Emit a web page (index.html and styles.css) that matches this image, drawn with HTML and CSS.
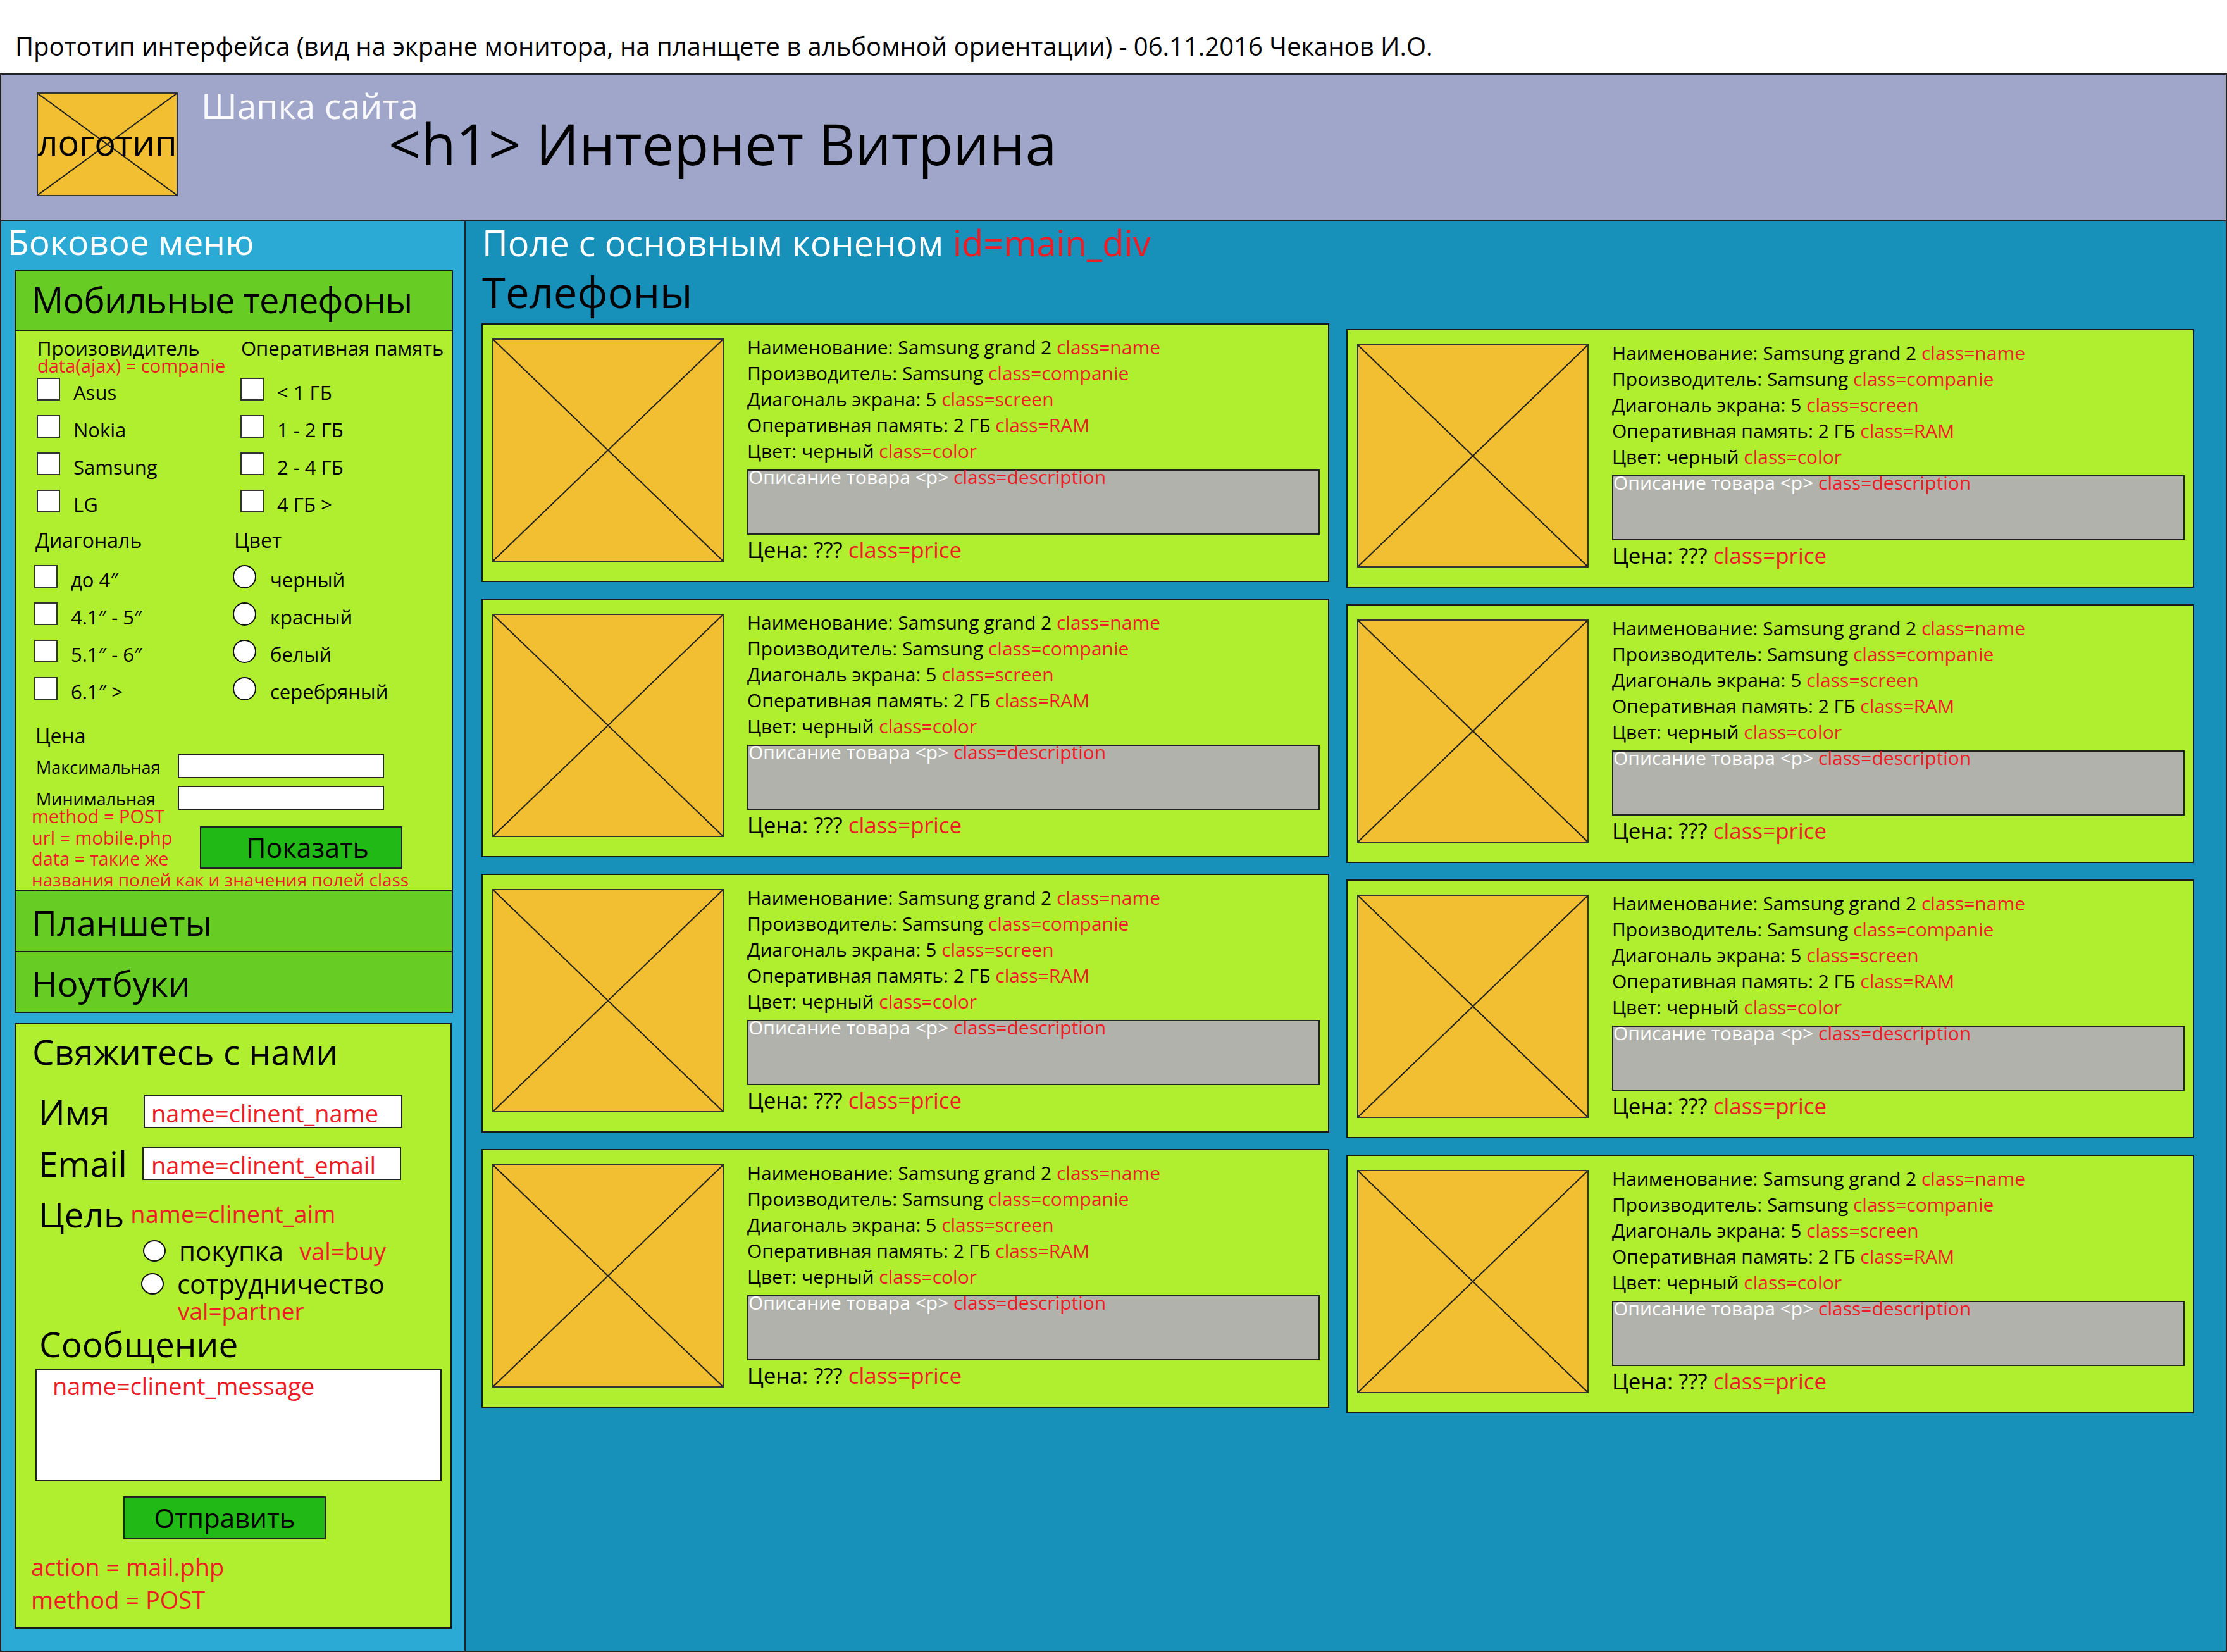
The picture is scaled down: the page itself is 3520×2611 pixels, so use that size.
FILE: index.html
```html
<!DOCTYPE html>
<html lang="ru">
<head>
<meta charset="utf-8">
<title>Прототип интерфейса</title>
<link rel="stylesheet" href="styles.css">
</head>
<body>
<div class="caption">Прототип интерфейса (вид на экране монитора, на планщете в альбомной ориентации) - 06.11.2016 Чеканов И.О.</div>
<div class="frame">
  <header class="site-header">
    <div class="logo">
      <svg class="cross" viewBox="0 0 100 100" preserveAspectRatio="none"><line x1="0" y1="0" x2="100" y2="100"/><line x1="100" y1="0" x2="0" y2="100"/></svg>
      <span class="logo-text">логотип</span>
    </div>
    <div class="header-text">
      <div class="header-label">Шапка сайта</div>
      <h1 class="site-title">&lt;h1&gt; Интернет Витрина</h1>
    </div>
  </header>

  <div class="layout">
    <aside class="sidebar">
      <div class="side-title">Боковое меню</div>

      <div class="catalog">
        <div class="cat-head">Мобильные телефоны</div>
        <div class="filter">
          <div class="f-grid f-top">
            <div class="f-head">Произовидитель</div>
            <div class="f-head">Оперативная память</div>
            <div class="note-tight">data(ajax) = companie</div>
            <div></div>
            <div class="opt first"><span class="chk"></span><span class="opt-label">Asus</span></div>
            <div class="opt first"><span class="chk"></span><span class="opt-label">&lt; 1 ГБ</span></div>
            <div class="opt"><span class="chk"></span><span class="opt-label">Nokia</span></div>
            <div class="opt"><span class="chk"></span><span class="opt-label">1 - 2 ГБ</span></div>
            <div class="opt"><span class="chk"></span><span class="opt-label">Samsung</span></div>
            <div class="opt"><span class="chk"></span><span class="opt-label">2 - 4 ГБ</span></div>
            <div class="opt"><span class="chk"></span><span class="opt-label">LG</span></div>
            <div class="opt"><span class="chk"></span><span class="opt-label">4 ГБ &gt;</span></div>
          </div>

          <div class="f-grid f-bottom">
            <div class="f-head f-head-b">Диагональ</div>
            <div class="f-head f-head-b">Цвет</div>
            <div class="opt first-b"><span class="chk"></span><span class="opt-label">до 4″</span></div>
            <div class="opt first-b"><span class="rad"></span><span class="opt-label">черный</span></div>
            <div class="opt"><span class="chk"></span><span class="opt-label">4.1″ - 5″</span></div>
            <div class="opt"><span class="rad"></span><span class="opt-label">красный</span></div>
            <div class="opt"><span class="chk"></span><span class="opt-label">5.1″ - 6″</span></div>
            <div class="opt"><span class="rad"></span><span class="opt-label">белый</span></div>
            <div class="opt"><span class="chk"></span><span class="opt-label">6.1″ &gt;</span></div>
            <div class="opt"><span class="rad"></span><span class="opt-label">серебряный</span></div>
          </div>

          <div class="price-head">Цена</div>
          <div class="price-row"><span class="price-label">Максимальная</span><span class="price-input"></span></div>
          <div class="price-row second"><span class="price-label">Минимальная</span><span class="price-input"></span></div>

          <div class="submit-area">
            <div class="note">method = POST</div>
            <div class="show-btn">Показать</div>
            <div class="note">url = mobile.php</div>
            <div class="note">data = такие же</div>
            <div class="note wide">названия полей как и значения полей class</div>
          </div>
        </div>
        <div class="cat-item">Планшеты</div>
        <div class="cat-item">Ноутбуки</div>
      </div>

      <div class="contact">
        <div class="contact-title">Свяжитесь с нами</div>
        <div class="field-row">
          <span class="field-label">Имя</span>
          <span class="field-input">name=clinent_name</span>
        </div>
        <div class="field-row second">
          <span class="field-label">Email</span>
          <span class="field-input shift">name=clinent_email</span>
        </div>
        <div class="aim-row"><span class="aim-label">Цель</span><span class="red aim-name">name=clinent_aim</span></div>
        <div class="aim-opt"><span class="rad small"></span><span class="aim-text">покупка</span><span class="red val-buy">val=buy</span></div>
        <div class="aim-opt second"><span class="rad small"></span><span class="aim-text">сотрудничество</span></div>
        <div class="red val-partner">val=partner</div>
        <div class="msg-label">Сообщение</div>
        <div class="msg-box">name=clinent_message</div>
        <div class="send-btn">Отправить</div>
        <div class="form-notes">
          <div>action = mail.php</div>
          <div>method = POST</div>
        </div>
      </div>
    </aside>

    <main class="main">
      <div class="main-label">Поле с основным коненом <span class="red">id=main_div</span></div>
      <h2 class="main-title">Телефоны</h2>
      <div class="cards">
        <div class="card-col">
          <div class="card">
            <div class="pic"><svg class="cross" viewBox="0 0 100 100" preserveAspectRatio="none"><line x1="0" y1="0" x2="100" y2="100"/><line x1="100" y1="0" x2="0" y2="100"/></svg></div>
            <div class="info">
              <div>Наименование: Samsung grand 2 <span class="red">class=name</span></div>
              <div>Производитель: Samsung <span class="red">class=companie</span></div>
              <div>Диагональ экрана: 5 <span class="red">class=screen</span></div>
              <div>Оперативная память: 2 ГБ <span class="red">class=RAM</span></div>
              <div>Цвет: черный <span class="red">class=color</span></div>
              <div class="desc"><div class="desc-text">Описание товара &lt;p&gt; <span class="red">class=description</span></div></div>
              <div class="price">Цена: ??? <span class="red">class=price</span></div>
            </div>
          </div>
          <div class="card">
            <div class="pic"><svg class="cross" viewBox="0 0 100 100" preserveAspectRatio="none"><line x1="0" y1="0" x2="100" y2="100"/><line x1="100" y1="0" x2="0" y2="100"/></svg></div>
            <div class="info">
              <div>Наименование: Samsung grand 2 <span class="red">class=name</span></div>
              <div>Производитель: Samsung <span class="red">class=companie</span></div>
              <div>Диагональ экрана: 5 <span class="red">class=screen</span></div>
              <div>Оперативная память: 2 ГБ <span class="red">class=RAM</span></div>
              <div>Цвет: черный <span class="red">class=color</span></div>
              <div class="desc"><div class="desc-text">Описание товара &lt;p&gt; <span class="red">class=description</span></div></div>
              <div class="price">Цена: ??? <span class="red">class=price</span></div>
            </div>
          </div>
          <div class="card">
            <div class="pic"><svg class="cross" viewBox="0 0 100 100" preserveAspectRatio="none"><line x1="0" y1="0" x2="100" y2="100"/><line x1="100" y1="0" x2="0" y2="100"/></svg></div>
            <div class="info">
              <div>Наименование: Samsung grand 2 <span class="red">class=name</span></div>
              <div>Производитель: Samsung <span class="red">class=companie</span></div>
              <div>Диагональ экрана: 5 <span class="red">class=screen</span></div>
              <div>Оперативная память: 2 ГБ <span class="red">class=RAM</span></div>
              <div>Цвет: черный <span class="red">class=color</span></div>
              <div class="desc"><div class="desc-text">Описание товара &lt;p&gt; <span class="red">class=description</span></div></div>
              <div class="price">Цена: ??? <span class="red">class=price</span></div>
            </div>
          </div>
          <div class="card">
            <div class="pic"><svg class="cross" viewBox="0 0 100 100" preserveAspectRatio="none"><line x1="0" y1="0" x2="100" y2="100"/><line x1="100" y1="0" x2="0" y2="100"/></svg></div>
            <div class="info">
              <div>Наименование: Samsung grand 2 <span class="red">class=name</span></div>
              <div>Производитель: Samsung <span class="red">class=companie</span></div>
              <div>Диагональ экрана: 5 <span class="red">class=screen</span></div>
              <div>Оперативная память: 2 ГБ <span class="red">class=RAM</span></div>
              <div>Цвет: черный <span class="red">class=color</span></div>
              <div class="desc"><div class="desc-text">Описание товара &lt;p&gt; <span class="red">class=description</span></div></div>
              <div class="price">Цена: ??? <span class="red">class=price</span></div>
            </div>
          </div>
        </div>

        <div class="card-col right">
          <div class="card">
            <div class="pic"><svg class="cross" viewBox="0 0 100 100" preserveAspectRatio="none"><line x1="0" y1="0" x2="100" y2="100"/><line x1="100" y1="0" x2="0" y2="100"/></svg></div>
            <div class="info">
              <div>Наименование: Samsung grand 2 <span class="red">class=name</span></div>
              <div>Производитель: Samsung <span class="red">class=companie</span></div>
              <div>Диагональ экрана: 5 <span class="red">class=screen</span></div>
              <div>Оперативная память: 2 ГБ <span class="red">class=RAM</span></div>
              <div>Цвет: черный <span class="red">class=color</span></div>
              <div class="desc"><div class="desc-text">Описание товара &lt;p&gt; <span class="red">class=description</span></div></div>
              <div class="price">Цена: ??? <span class="red">class=price</span></div>
            </div>
          </div>
          <div class="card">
            <div class="pic"><svg class="cross" viewBox="0 0 100 100" preserveAspectRatio="none"><line x1="0" y1="0" x2="100" y2="100"/><line x1="100" y1="0" x2="0" y2="100"/></svg></div>
            <div class="info">
              <div>Наименование: Samsung grand 2 <span class="red">class=name</span></div>
              <div>Производитель: Samsung <span class="red">class=companie</span></div>
              <div>Диагональ экрана: 5 <span class="red">class=screen</span></div>
              <div>Оперативная память: 2 ГБ <span class="red">class=RAM</span></div>
              <div>Цвет: черный <span class="red">class=color</span></div>
              <div class="desc"><div class="desc-text">Описание товара &lt;p&gt; <span class="red">class=description</span></div></div>
              <div class="price">Цена: ??? <span class="red">class=price</span></div>
            </div>
          </div>
          <div class="card">
            <div class="pic"><svg class="cross" viewBox="0 0 100 100" preserveAspectRatio="none"><line x1="0" y1="0" x2="100" y2="100"/><line x1="100" y1="0" x2="0" y2="100"/></svg></div>
            <div class="info">
              <div>Наименование: Samsung grand 2 <span class="red">class=name</span></div>
              <div>Производитель: Samsung <span class="red">class=companie</span></div>
              <div>Диагональ экрана: 5 <span class="red">class=screen</span></div>
              <div>Оперативная память: 2 ГБ <span class="red">class=RAM</span></div>
              <div>Цвет: черный <span class="red">class=color</span></div>
              <div class="desc"><div class="desc-text">Описание товара &lt;p&gt; <span class="red">class=description</span></div></div>
              <div class="price">Цена: ??? <span class="red">class=price</span></div>
            </div>
          </div>
          <div class="card">
            <div class="pic"><svg class="cross" viewBox="0 0 100 100" preserveAspectRatio="none"><line x1="0" y1="0" x2="100" y2="100"/><line x1="100" y1="0" x2="0" y2="100"/></svg></div>
            <div class="info">
              <div>Наименование: Samsung grand 2 <span class="red">class=name</span></div>
              <div>Производитель: Samsung <span class="red">class=companie</span></div>
              <div>Диагональ экрана: 5 <span class="red">class=screen</span></div>
              <div>Оперативная память: 2 ГБ <span class="red">class=RAM</span></div>
              <div>Цвет: черный <span class="red">class=color</span></div>
              <div class="desc"><div class="desc-text">Описание товара &lt;p&gt; <span class="red">class=description</span></div></div>
              <div class="price">Цена: ??? <span class="red">class=price</span></div>
            </div>
          </div>
        </div>
      </div>
    </main>
  </div>
</div>
</body>
</html>
```

FILE: styles.css
```css
* { box-sizing: border-box; margin: 0; padding: 0; }

html, body {
  width: 3520px;
  height: 2611px;
  overflow: hidden;
  background: #ffffff;
}

body {
  font-family: "Open Sans", "Noto Sans", sans-serif;
  color: #000;
  white-space: nowrap;
}

.red { color: #ee1c25; }

/* ---------- caption ---------- */
.caption {
  height: 116px;
  padding: 44px 0 0 24px;
  font-size: 40px;
  line-height: 58px;
}

/* ---------- frame ---------- */
.frame {
  height: 2495px;
  border: 2px solid #222;
  display: flex;
  flex-direction: column;
}

.site-header {
  height: 232px;
  flex: none;
  display: flex;
  align-items: flex-start;
  background: #9fa6c9;
  border-bottom: 2px solid #222;
  padding-left: 56px;
}

.logo {
  position: relative;
  width: 223px;
  height: 164px;
  margin-top: 28px;
  background: #f1bf31;
  border: 2px solid #333;
  display: flex;
  align-items: center;
  justify-content: center;
}

.cross {
  position: absolute;
  left: 0;
  top: 0;
  width: 100%;
  height: 100%;
}

.cross line {
  stroke: #222;
  stroke-width: 2;
  vector-effect: non-scaling-stroke;
}

.logo-text {
  position: relative;
  font-size: 56px;
  line-height: 1;
  margin-top: -9px;
}

.header-text {
  margin: 17px 0 0 37px;
}

.header-label {
  color: #fafafc;
  font-size: 55px;
  line-height: 64px;
}

.site-title {
  font-weight: normal;
  font-size: 90px;
  line-height: 100px;
  margin: -23px 0 0 296px;
}

/* ---------- layout ---------- */
.layout {
  flex: 1;
  display: flex;
  min-height: 0;
}

.sidebar {
  width: 734px;
  flex: none;
  background: #2caad6;
  border-right: 2px solid #222;
}

.side-title {
  color: #fff;
  font-size: 55px;
  line-height: 60px;
  padding: 0 0 0 10px;
  margin-top: 2px;
  height: 56px;
}

/* catalog */
.catalog {
  margin: 19px 0 0 21px;
  width: 693px;
  border: 2px solid #1a1a1a;
  background: #b0ef30;
}

.cat-head,
.cat-item {
  background: #67cd25;
  padding-left: 25px;
}

.cat-head {
  height: 94px;
  border-bottom: 2px solid #1a1a1a;
  font-size: 56px;
  letter-spacing: -0.8px;
  line-height: 88px;
}

.cat-item {
  height: 96px;
  border-top: 2px solid #1a1a1a;
  font-size: 55px;
  line-height: 98px;
}

.filter {
  padding-top: 11px;
}

.f-grid {
  display: grid;
}

.f-top {
  grid-template-columns: 322px 1fr;
  padding-left: 33px;
}

.f-bottom {
  grid-template-columns: 314px 1fr;
  padding-left: 31px;
  margin-top: 3px;
}

.f-head {
  font-size: 31px;
  line-height: 33px;
  padding-left: 1px;
}

.f-head-b {
  font-size: 32px;
  line-height: 36px;
  padding-left: 0;
}

.note-tight {
  color: #ee1c25;
  font-size: 29px;
  line-height: 22px;
  padding-left: 1px;
}

.opt {
  display: flex;
  align-items: flex-start;
  height: 59px;
  font-size: 31px;
  line-height: 36px;
}

.opt.first { margin-top: 8px; }
.opt.first-b { margin-top: 21px; }

.f-bottom .opt { margin-left: -2px; }

.opt-label { padding-top: 5px; }

.chk {
  flex: none;
  width: 37px;
  height: 36px;
  background: #fff;
  border: 2px solid #333;
  margin-right: 21px;
}

.rad {
  flex: none;
  width: 37px;
  height: 37px;
  border-radius: 50%;
  background: #fff;
  border: 2px solid #111;
  margin-right: 22px;
}

.price-head {
  font-size: 32px;
  line-height: 36px;
  padding-left: 31px;
  margin-top: 16px;
}

.price-row {
  display: flex;
  align-items: flex-start;
  height: 38px;
  margin-top: 11px;
  padding-left: 32px;
}

.price-row.second { margin-top: 12px; }

.price-label {
  width: 224px;
  font-size: 27px;
  line-height: 38px;
  padding-top: 2px;
}

.price-input {
  width: 326px;
  height: 38px;
  background: #fff;
  border: 2px solid #222;
}

.submit-area {
  display: grid;
  grid-template-columns: 266px 1fr;
  margin: -7px 0 0 25px;
  color: #ee1c25;
  font-size: 29px;
  line-height: 33.5px;
}

.note { grid-column: 1; }
.note.wide { grid-column: 1 / -1; font-size: 28px; }

.show-btn {
  grid-column: 2;
  grid-row: 1 / 4;
  align-self: start;
  margin-top: 33px;
  width: 320px;
  height: 67px;
  background: #20b915;
  border: 2px solid #222;
  color: #000;
  font-size: 43px;
  line-height: 63px;
  text-align: center;
  padding-left: 20px;
}

/* contact */
.contact {
  margin: 16px 0 0 21px;
  width: 691px;
  height: 957px;
  border: 2px solid #1a1a1a;
  background: #b0ef30;
  padding-top: 8px;
}

.contact-title {
  font-size: 55px;
  line-height: 70px;
  padding-left: 26px;
}

.field-row {
  display: flex;
  align-items: flex-start;
  margin-top: 34px;
  height: 52px;
}

.field-row.second { margin-top: 30px; }

.field-label {
  width: 202px;
  padding-left: 36px;
  font-size: 55px;
  line-height: 52px;
}

.field-input {
  width: 409px;
  height: 52px;
  background: #fff;
  border: 2px solid #222;
  color: #ee1c25;
  font-size: 38px;
  line-height: 46px;
  padding: 3px 0 0 10px;
}

.field-input.shift { margin-left: -2px; padding-left: 12px; }

.aim-row {
  margin-top: 27px;
  padding-left: 36px;
  line-height: 52px;
  height: 52px;
}

.aim-label {
  font-size: 55px;
}

.aim-name {
  font-size: 38px;
  margin-left: 10px;
  vertical-align: 7px;
}

.aim-opt {
  display: flex;
  align-items: flex-start;
  height: 34px;
  margin-top: 16px;
  padding-left: 201px;
  font-size: 42px;
  line-height: 34px;
}

.aim-opt.second {
  margin-top: 18px;
  padding-left: 198px;
}

.rad.small {
  width: 36px;
  height: 34px;
  margin-right: 21px;
}

.val-buy {
  font-size: 38px;
  margin-left: 25px;
}

.val-partner {
  font-size: 37px;
  line-height: 38px;
  margin-top: 7px;
  padding-left: 256px;
}

.msg-label {
  font-size: 55px;
  line-height: 62px;
  padding-left: 37px;
  margin-top: 2px;
}

.msg-box {
  margin: 9px 0 0 31px;
  width: 642px;
  height: 177px;
  background: #fff;
  border: 2px solid #222;
  color: #ee1c25;
  font-size: 38px;
  line-height: 44px;
  padding: 2px 0 0 25px;
}

.send-btn {
  margin: 24px 0 0 170px;
  width: 320px;
  height: 68px;
  background: #20b915;
  border: 2px solid #222;
  font-size: 42px;
  line-height: 64px;
  text-align: center;
}

.form-notes {
  margin-top: 17px;
  padding-left: 24px;
  color: #ee1c25;
  font-size: 38px;
  line-height: 52px;
}

/* ---------- main ---------- */
.main {
  flex: 1;
  background: #1790ba;
  padding-left: 25px;
}

.main-label {
  color: #fff;
  font-size: 56px;
  line-height: 60px;
  padding: 3px 0 0 1px;
}

.main-title {
  font-weight: normal;
  font-size: 67px;
  line-height: 76px;
  margin-top: 10px;
  padding-left: 1px;
}

.cards {
  display: flex;
  gap: 27px;
  margin-top: 12px;
}

.card-col {
  display: flex;
  flex-direction: column;
  gap: 26px;
  width: 1340px;
}

.card-col.right { padding-top: 9px; }

.card {
  height: 409px;
  display: flex;
  align-items: flex-start;
  background: #b0ef30;
  border: 2px solid #1a1a1a;
  padding: 22px 13px 0 15px;
}

.pic {
  position: relative;
  flex: none;
  width: 366px;
  height: 353px;
  background: #f1bf31;
  border: 2px solid #333;
}

.info {
  flex: 1;
  margin: -7px 0 0 37px;
  font-size: 30px;
  line-height: 41px;
}

.desc {
  height: 103px;
  margin-top: 9px;
  background: #b1b2ab;
  border: 2px solid #222;
}

.desc-text {
  color: #fff;
  margin-top: -11px;
}

.price {
  font-size: 35px;
  line-height: 44px;
  margin-top: 2px;
}
```
